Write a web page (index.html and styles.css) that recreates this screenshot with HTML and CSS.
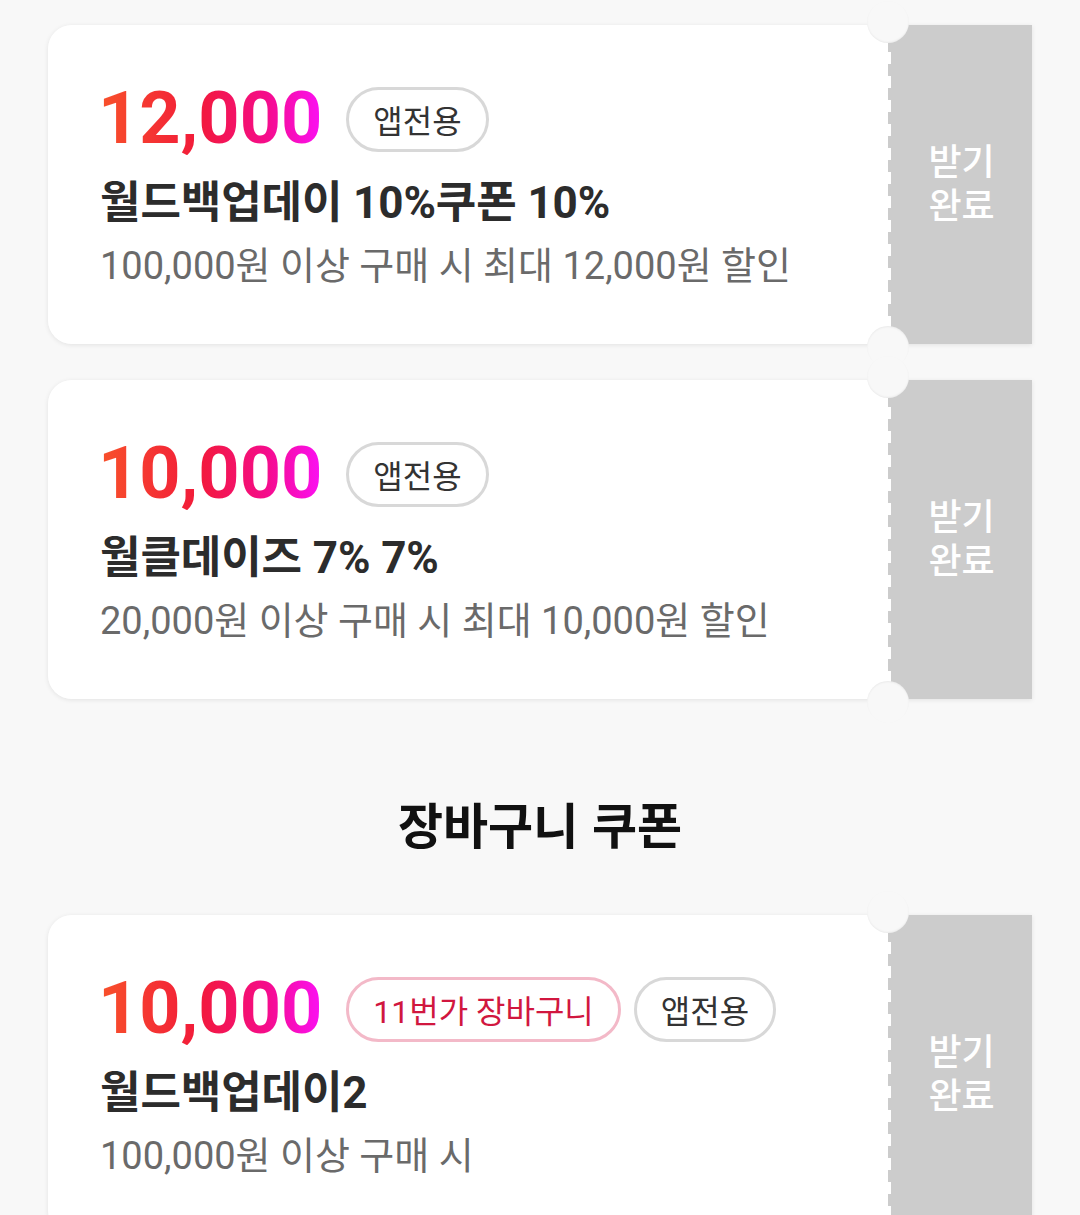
FILE: index.html
```html
<!DOCTYPE html>
<html lang="ko">
<head>
<meta charset="utf-8">
<title>쿠폰</title>
<link rel="stylesheet" href="styles.css">
</head>
<body>
<div class="page">
  <div class="coupon">
    <div class="coupon-body">
      <div class="amount-row">
        <span class="amount">12,000</span>
        <span class="badge">앱전용</span>
      </div>
      <div class="title">월드백업데이 10%쿠폰 10%</div>
      <div class="desc">100,000원 이상 구매 시 최대 12,000원 할인</div>
    </div>
    <div class="stub"><div class="stub-text"><span class="stub-line">받기</span><span class="stub-line">완료</span></div></div>
    <span class="notch notch-top"></span>
    <span class="notch notch-bottom"></span>
  </div>

  <div class="coupon">
    <div class="coupon-body">
      <div class="amount-row">
        <span class="amount">10,000</span>
        <span class="badge">앱전용</span>
      </div>
      <div class="title">월클데이즈 7% 7%</div>
      <div class="desc">20,000원 이상 구매 시 최대 10,000원 할인</div>
    </div>
    <div class="stub"><div class="stub-text"><span class="stub-line">받기</span><span class="stub-line">완료</span></div></div>
    <span class="notch notch-top"></span>
    <span class="notch notch-bottom"></span>
  </div>

  <h2 class="section-title">장바구니 쿠폰</h2>

  <div class="coupon">
    <div class="coupon-body">
      <div class="amount-row">
        <span class="amount">10,000</span>
        <span class="badge badge-pink">11번가 장바구니</span>
        <span class="badge">앱전용</span>
      </div>
      <div class="title">월드백업데이2</div>
      <div class="desc">100,000원 이상 구매 시</div>
    </div>
    <div class="stub"><div class="stub-text"><span class="stub-line">받기</span><span class="stub-line">완료</span></div></div>
    <span class="notch notch-top"></span>
    <span class="notch notch-bottom"></span>
  </div>
</div>
</body>
</html>
```

FILE: styles.css
```css
html, body {
  margin: 0;
  padding: 0;
}
body {
  background: #f8f8f8;
  font-family: Roboto, "Noto Sans CJK KR", sans-serif;
  color: #222;
}
.page {
  display: flex;
  flex-direction: column;
  padding: 25px 48px 0;
}
.coupon {
  position: relative;
  display: flex;
  height: 319px;
  margin-bottom: 36px;
  border-radius: 24px 0 0 24px;
  box-shadow: 0 1px 5px rgba(0, 0, 0, 0.09);
  flex-shrink: 0;
}
.coupon-body {
  flex: 1;
  background: #fff;
  border-radius: 24px 0 0 24px;
  padding: 58px 0 0 52px;
  display: flex;
  flex-direction: column;
}
.amount-row {
  display: flex;
  align-items: center;
  gap: 13px;
  height: 72px;
}
.amount {
  font-family: Roboto, sans-serif;
  font-weight: 700;
  font-size: 72px;
  line-height: 72px;
  margin-left: -2px;
  margin-right: 11px;
  background: linear-gradient(90deg, #f8522a 0%, #f21a3a 45%, #f50c8a 75%, #fb10f6 100%);
  -webkit-background-clip: text;
  background-clip: text;
  color: transparent;
}
.badge {
  box-sizing: border-box;
  height: 65px;
  border: 3px solid #d8d8d8;
  border-radius: 33px;
  padding: 0 24px;
  display: flex;
  align-items: center;
  font-family: "Noto Sans CJK KR", sans-serif;
  font-size: 32px;
  color: #333;
  background: #fff;
}
.badge-pink {
  border-color: #f3b9c8;
  color: #d1173f;
  font-family: Roboto, "Noto Sans CJK KR", sans-serif;
}
.title {
  margin-top: 20px;
  font-size: 44px;
  line-height: 56px;
  font-weight: 700;
  color: #2c2c2c;
  letter-spacing: -0.1px;
}
.desc {
  margin-top: 10px;
  font-size: 38px;
  line-height: 50px;
  color: #6a6a6a;
}
.stub {
  width: 141px;
  background: #cccccc;
  position: relative;
  display: flex;
  align-items: center;
  justify-content: center;
  border-left: 3px solid transparent;
  background-clip: padding-box;
}
.stub::before {
  content: "";
  position: absolute;
  left: -3px;
  top: 0;
  bottom: 0;
  width: 3px;
  background: repeating-linear-gradient(180deg, #fff 0 12px, #cccccc 12px 24px);
  background-position: 0 3px;
}
.stub-text {
  display: flex;
  flex-direction: column;
  align-items: center;
  margin-top: -8px;
}
.stub-line {
  font-family: "Noto Sans CJK KR", sans-serif;
  font-weight: 500;
  font-size: 36px;
  line-height: 44px;
  height: 44px;
  color: #fff;
}
.notch {
  position: absolute;
  width: 42px;
  height: 42px;
  border-radius: 50%;
  background: #f8f8f8;
  right: 123px;
}
.notch-top {
  top: -24px;
  box-shadow: inset 0 -1px 2px rgba(0, 0, 0, 0.06);
}
.notch-bottom {
  bottom: -24px;
  box-shadow: inset 0 1px 2px rgba(0, 0, 0, 0.06);
}
.section-title {
  margin: 58px 0 0;
  height: 122px;
  text-align: center;
  font-family: "Noto Sans CJK KR", sans-serif;
  font-weight: 700;
  font-size: 49px;
  line-height: 60px;
  color: #111;
}
```
